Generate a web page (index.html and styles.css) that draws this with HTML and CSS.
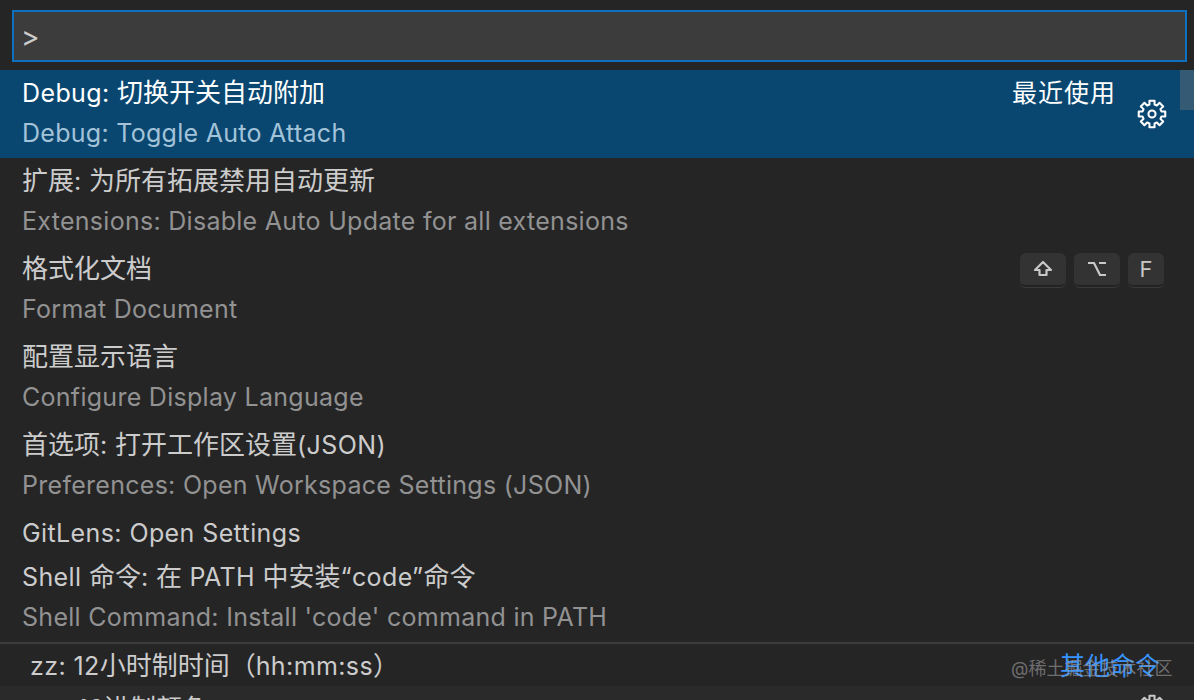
FILE: index.html

```html
<!DOCTYPE html>
<html lang="zh-CN">
<head>
  <meta charset="UTF-8">
  <title>Command Palette</title>
  <link rel="stylesheet" href="styles.css">
</head>
<body>
  <div class="palette">
    <div class="input-wrap">
      <div class="input-box">&gt;</div>
    </div>
    <div class="list">
      <div class="row row-active">
        <div class="row-main">
          <div class="label">Debug: <span class="zh">切换开关自动附加</span></div>
          <div class="detail">Debug: Toggle Auto Attach</div>
        </div>
        <div class="recent">最近使用</div>
        <svg class="gear" viewBox="0 0 16 16" fill="none" stroke="#fff" stroke-width="1.1" stroke-linejoin="round">
          <path d="M6.63 .93H9.37L9.35 2.98 10.6 3.5 12.03 2.03 13.97 3.97 12.5 5.4 13.02 6.65 15.07 6.63V9.37L13.02 9.35 12.5 10.6 13.97 12.03 12.03 13.97 10.6 12.5 9.35 13.02 9.37 15.07H6.63L6.65 13.02 5.4 12.5 3.97 13.97 2.03 12.03 3.5 10.6 2.98 9.35 .93 9.37V6.63L2.98 6.65 3.5 5.4 2.03 3.97 3.97 2.03 5.4 3.5 6.65 2.98Z"/>
          <circle cx="8" cy="8" r="1.9"/>
        </svg>
        <div class="scroll-thumb"></div>
      </div>
      <div class="row">
        <div class="row-main">
          <div class="label"><span class="zh">扩展</span>: <span class="zh">为所有拓展禁用自动更新</span></div>
          <div class="detail">Extensions: Disable Auto Update for all extensions</div>
        </div>
      </div>
      <div class="row">
        <div class="row-main">
          <div class="label"><span class="zh">格式化文档</span></div>
          <div class="detail">Format Document</div>
        </div>
        <div class="keys">
          <span class="key">
            <svg class="key-icon" viewBox="0 0 20 18" fill="none" stroke="#c8c8c8" stroke-width="2.2">
              <path d="M10 2 2 10h4.500v5h7v-5H18z" stroke-linejoin="round"/>
            </svg>
          </span>
          <span class="key">
            <svg class="key-icon" viewBox="0 0 20 18" fill="none" stroke="#c8c8c8" stroke-width="2.2">
              <path d="M1 3h6l6 12h6M12 3h7"/>
            </svg>
          </span>
          <span class="key key-small">F</span>
        </div>
      </div>
      <div class="row">
        <div class="row-main">
          <div class="label"><span class="zh">配置显示语言</span></div>
          <div class="detail">Configure Display Language</div>
        </div>
      </div>
      <div class="row">
        <div class="row-main">
          <div class="label"><span class="zh">首选项</span>: <span class="zh">打开工作区设置</span>(JSON)</div>
          <div class="detail">Preferences: Open Workspace Settings (JSON)</div>
        </div>
      </div>
      <div class="row row-single">
        <div class="row-main">
          <div class="label">GitLens: Open Settings</div>
        </div>
      </div>
      <div class="row">
        <div class="row-main">
          <div class="label">Shell <span class="zh">命令</span>: <span class="zh">在</span> PATH <span class="zh">中安装</span>“code”<span class="zh">命令</span></div>
          <div class="detail">Shell Command: Install 'code' command in PATH</div>
        </div>
      </div>
      <div class="row row-other">
        <div class="label">zz: 12<span class="zh">小时制时间（</span>hh:mm:ss<span class="zh">）</span></div>
        <div class="other-link">其他命令</div>
      </div>
      <div class="row row-clipped">
        <div class="label">zz: 16<span class="zh">进制颜色</span></div>
        <svg class="gear gear-clipped" viewBox="0 0 16 16" fill="none" stroke="#c8c8c8" stroke-width="1.1" stroke-linejoin="round">
          <path d="M6.63 .93H9.37L9.35 2.98 10.6 3.5 12.03 2.03 13.97 3.97 12.5 5.4 13.02 6.65 15.07 6.63V9.37L13.02 9.35 12.5 10.6 13.97 12.03 12.03 13.97 10.6 12.5 9.35 13.02 9.37 15.07H6.63L6.65 13.02 5.4 12.5 3.97 13.97 2.03 12.03 3.5 10.6 2.98 9.35 .93 9.37V6.63L2.98 6.65 3.5 5.4 2.03 3.97 3.97 2.03 5.4 3.5 6.65 2.98Z"/>
        </svg>
      </div>
    </div>
  </div>
  <div class="watermark">@稀土掘金技术社区</div>
</body>
</html>
```

FILE: styles.css

```css
html, body { margin: 0; height: 700px; overflow: hidden; }
body { background: #252526; color: #ccc; font-family: Inter, "Noto Sans CJK SC", sans-serif; font-size: 25px; position: relative; }
.palette { height: 700px; overflow: hidden; }
.input-wrap { padding: 10px 7px 8px 12px; }
.input-box { height: 48px; border: 2px solid #0e70c0; background: #3c3c3c; padding: 0 7px; line-height: 50px; color: #ccc; font-size: 28px; }
.row { height: 88px; padding-left: 22px; display: flex; position: relative; box-sizing: border-box; }
.row-main { flex: 1; }
.label { height: 44px; line-height: 46px; white-space: nowrap; color: #ccc; letter-spacing: 0.4px; }
.zh { font-size: 26px; letter-spacing: 0; }
.detail { height: 44px; line-height: 38px; white-space: nowrap; color: #929292; letter-spacing: 0.28px; }
.row-active { background: #094771; }
.row-active .label { color: #fff; }
.row-active .detail { color: #a3c3d9; }
.recent { color: #fff; line-height: 46px; position: absolute; left: 1012px; top: 0; letter-spacing: 1px; }
.gear { width: 30px; height: 30px; position: absolute; left: 1137px; top: 29px; }
.scroll-thumb { position: absolute; right: 0; top: 0; width: 14px; height: 40px; background: rgba(121, 121, 121, 0.4); }
.row-single { height: 44px; }
.keys { display: flex; gap: 8px; margin: 7px 30px 0 0; }
.key { height: 34px; min-width: 46px; box-sizing: border-box; background: #333334; border-radius: 6px; border-bottom: 2px solid #222; box-shadow: 0 1px 0 #3a3a3a; display: flex; align-items: center; justify-content: center; color: #c8c8c8; font-size: 22px; }
.key-small { min-width: 36px; }
.key-icon { width: 20px; height: 18px; }
.row-other { height: 44px; border-top: 2px solid #3c3c3c; padding-left: 30px; justify-content: space-between; }
.row-other .label { line-height: 44px; }
.other-link { color: #3794ff; margin-right: 34px; line-height: 44px; }
.row-clipped { height: 60px; background: #2a2a2b; padding-left: 34px; }
.gear-clipped { top: 8px; }
.watermark { position: absolute; left: 1011px; top: 654px; font-size: 18px; color: rgba(160, 160, 160, 0.6); white-space: nowrap; }
```
